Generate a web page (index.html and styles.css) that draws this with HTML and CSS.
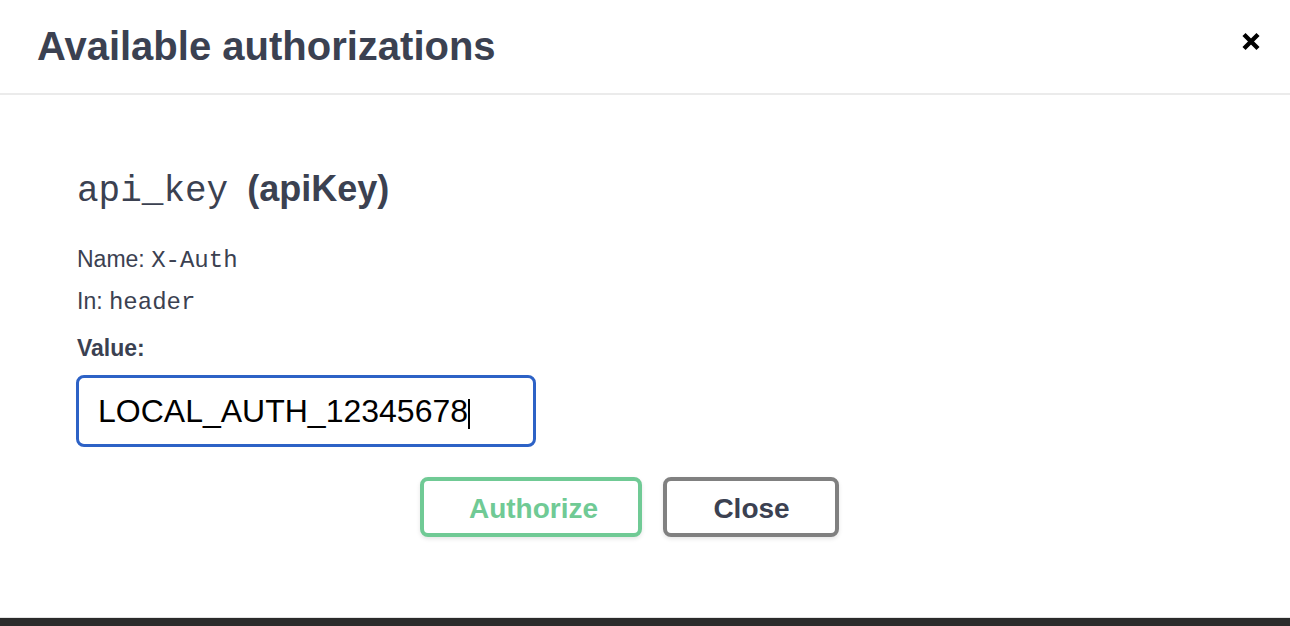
FILE: index.html
```html
<!DOCTYPE html>
<html lang="en">
<head>
<meta charset="utf-8">
<title>Available authorizations</title>
<link rel="stylesheet" href="styles.css">
</head>
<body>
<div class="modal">
  <header class="modal-header">
    <h3 class="modal-title">Available authorizations</h3>
    <button class="close-x" type="button" aria-label="Close">
      <svg width="20" height="21" viewBox="0 0 20 21" aria-hidden="true">
        <path d="M3 3.5L17 17.5M17 3.5L3 17.5" stroke="#000" stroke-width="4.4" fill="none"/>
      </svg>
    </button>
  </header>
  <div class="modal-content">
    <form class="auth">
      <h4 class="auth-title"><code class="mono-lg">api_key</code> (apiKey)</h4>
      <p class="auth-line">Name: <code class="mono">X-Auth</code></p>
      <p class="auth-line auth-line-in">In: <code class="mono">header</code></p>
      <label class="auth-label">Value:</label>
      <div class="value-input"><span class="value-text">LOCAL_AUTH_12345678</span><span class="caret"></span></div>
      <div class="btn-wrapper">
        <button class="btn btn-authorize" type="button">Authorize</button>
        <button class="btn btn-close" type="button">Close</button>
      </div>
    </form>
  </div>
</div>
</body>
</html>
```
FILE: styles.css
```css
html, body {
  margin: 0;
  padding: 0;
}

body {
  background: #2b2b2b;
  font-family: "Liberation Sans", Arial, sans-serif;
  color: #3b4151;
}

.modal {
  background: #ffffff;
  height: 617px;
  border-bottom: 1px solid #e4e4e4;
  display: flex;
  flex-direction: column;
}

.modal-header {
  display: flex;
  justify-content: space-between;
  align-items: flex-start;
  padding: 22px 29px 23px 37px;
  border-bottom: 2px solid #ebebeb;
}

.modal-title {
  margin: 0;
  font-size: 40px;
  line-height: 48px;
  font-weight: 700;
  color: #3b4151;
}

.close-x {
  margin: 9px 0 0 0;
  padding: 0;
  border: none;
  background: none;
  width: 20px;
  height: 21px;
  display: block;
}

.close-x svg {
  display: block;
}

.modal-content {
  padding: 72px 77px 0 77px;
}

.auth {
  display: flex;
  flex-direction: column;
  align-items: flex-start;
}

.auth-title {
  margin: 0;
  font-size: 36px;
  line-height: 44px;
  font-weight: 700;
  color: #3b4151;
}

.mono-lg {
  font-family: "Liberation Mono", "DejaVu Sans Mono", monospace;
  font-weight: 400;
  font-size: 36px;
  line-height: 36px;
  margin-right: 9px;
}

.auth-line {
  margin: 34px 0 0 0;
  font-size: 23px;
  line-height: 28px;
}

.auth-line-in {
  margin-top: 14px;
}

.mono {
  font-family: "Liberation Mono", "DejaVu Sans Mono", monospace;
  font-size: 24px;
  line-height: 24px;
}

.auth-label {
  margin-top: 19px;
  font-size: 23px;
  line-height: 28px;
  font-weight: 700;
}

.value-input {
  margin: 13px 0 0 -1px;
  box-sizing: border-box;
  width: 460px;
  height: 72px;
  border: 3px solid #2d62c6;
  border-radius: 8px;
  display: flex;
  align-items: center;
  padding-left: 19px;
  font-size: 32px;
  color: #000000;
}

.caret {
  display: inline-block;
  width: 2px;
  height: 30px;
  background: #000;
  margin-top: 6px;
}

.btn-wrapper {
  align-self: stretch;
  display: flex;
  justify-content: center;
  gap: 21px;
  margin-top: 30px;
}

.btn {
  box-sizing: border-box;
  height: 60px;
  border-radius: 8px;
  border: 4px solid #808080;
  background: #fff;
  font-family: "Liberation Sans", Arial, sans-serif;
  font-size: 28px;
  font-weight: 700;
  padding: 3px 0 0 0;
  text-align: center;
  box-shadow: 0 2px 4px rgba(0, 0, 0, 0.1);
}

.btn-authorize {
  width: 222px;
  padding-left: 6px;
  border-color: #70ca95;
  color: #70ca95;
}

.btn-close {
  width: 176px;
  padding-left: 2px;
  color: #3b4151;
  margin-right: 32px;
}
```
